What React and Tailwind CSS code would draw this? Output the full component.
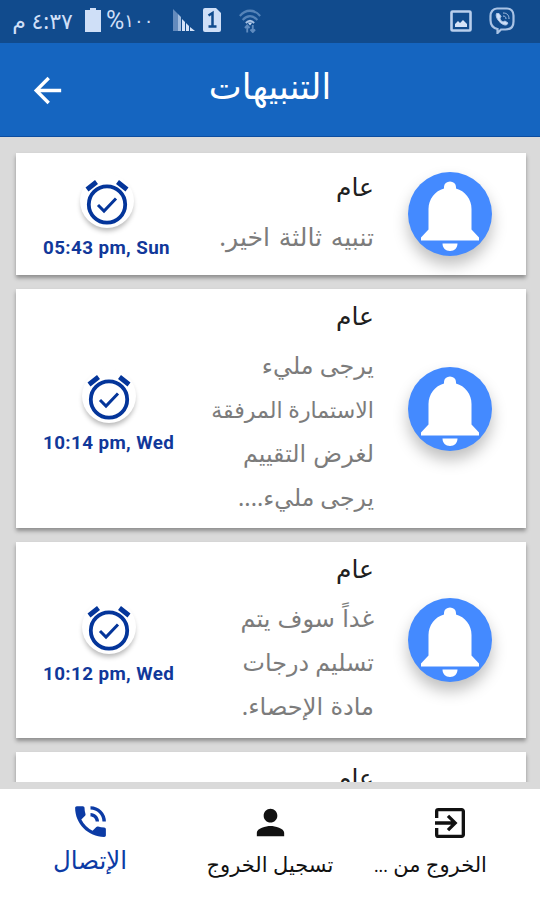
import { MdArrowBack, MdPhoneInTalk, MdPerson, MdExitToApp } from 'react-icons/md';

const NOTIFICATIONS = [
  {
    id: 1,
    title: 'عام',
    lines: [{ text: 'تنبيه ثالثة اخير.', size: 'text-[25.200px] [word-spacing:2px]' }],
    time: '05:43 pm, Sun',
    height: 'h-[122px]',
  },
  {
    id: 2,
    title: 'عام',
    lines: [
      { text: 'يرجى مليء', size: 'text-[23.800px]' },
      { text: 'الاستمارة المرفقة', size: 'text-[22.100px]' },
      { text: 'لغرض التقييم', size: 'text-[23.800px] [word-spacing:1px]' },
      { text: 'يرجى مليء....', size: 'text-[23.500px]' },
    ],
    time: '10:14 pm, Wed',
    height: 'h-[239px]',
  },
  {
    id: 3,
    title: 'عام',
    lines: [
      { text: 'غداً سوف يتم', size: 'text-[24px] [word-spacing:1px]' },
      { text: 'تسليم درجات', size: 'text-[23.800px]' },
      { text: 'مادة الإحصاء.', size: 'text-[24.100px] [word-spacing:1px]' },
    ],
    time: '10:12 pm, Wed',
    height: 'h-[196px]',
  },
];

const BellIcon = () => (
  <svg viewBox="0 0 84 84" className="block h-[84px] w-[84px]" fill="#fff">
    <path d="M36 16.500V15a6 5.500 0 0 1 12 0v1.500C57 19 63.500 27 63.500 37v20.500L71 65.500V68.500H13v-3L20.500 57.500V37c0-10 6.500-18 15.500-20.500Z" />
    <path d="M34.500 71.500h15c0 4.500-3 7.500-7.500 7.500s-7.500-3-7.500-7.500Z" />
  </svg>
);

const AlarmIcon = () => (
  <svg viewBox="0 0 54 54" className="block h-[54px] w-[54px]" fill="none" stroke="#04359a">
    <circle cx="27" cy="30.500" r="18.200" strokeWidth="3.800" />
    <path d="M7 15.500 16.500 8M37.500 8 47 15.500" strokeWidth="4.800" />
    <path d="m18 31 6 6L36 24.500" strokeWidth="3" />
  </svg>
);

const SignalIcon = () => (
  <svg viewBox="0 0 24 24" className="h-6 w-6">
    <path d="M1 1v22h5V6Z" fill="#648bbd" />
    <path d="M6 6v17h3V9Z" fill="#a3bddf" />
    <path d="M10 11v12h3v-9Z" fill="#d5e3f8" />
    <path d="M14 15v8h3v-5Z" fill="#d5e3f8" />
    <path d="M18 19v4h5Z" fill="#d5e3f8" />
  </svg>
);

const WifiIcon = () => (
  <svg viewBox="0 0 26 26" className="h-[26px] w-[24px]" fill="none" preserveAspectRatio="none">
    <path d="M2 9C8 2 18 2 24 9M5 13c5-5 11-5 16 0" stroke="#5583b8" strokeWidth="2.300" />
    <path d="M8.500 16c3-3 6-3 9 0" stroke="#a9c3e5" strokeWidth="2" />
    <path d="M13 18.500 10.500 15.500h5Z" fill="#c5d8f2" />
    <path d="M10 25.500v-7M7.500 21l2.500-2.500 2.500 2.500M16 18v7M13.500 22.500 16 25l2.500-2.500" stroke="#5f8bbf" strokeWidth="2" />
  </svg>
);

const StatusBar = () => (
  <div className="flex h-[43px] shrink-0 items-center bg-[#114b8d] pb-[3px] text-[#cfdff7]">
    <div dir="rtl" className="ml-3 w-[61px] text-center text-[22px] leading-none whitespace-nowrap">٤:٣٧ م</div>
    <svg viewBox="0 0 16 24" className="ml-[12px] h-6 w-4" fill="#cfdff7">
      <path d="M5 0h6v2h5v22H0V2h5Z" />
    </svg>
    <div dir="ltr" className="ml-[5px] flex w-[47px] items-center leading-none whitespace-nowrap">
      <span className="pt-px font-[Roboto] text-[25px]">%</span>
      <span className="text-[18px]">١٠٠</span>
    </div>
    <div className="ml-[19px]"><SignalIcon /></div>
    <svg viewBox="0 0 18 24" className="ml-[7px] h-6 w-[18px]">
      <path d="M2 0h11l5 5v17q0 2-2 2H2q-2 0-2-2V2q0-2 2-2Z" fill="#cfdff7" />
      <path d="M5.500 7.500 9.500 5v13.500M5.500 18.500h8" stroke="#114b8d" strokeWidth="2.500" fill="none" />
    </svg>
    <div className="ml-[17px]"><WifiIcon /></div>
    <svg viewBox="0 0 22 22" className="ml-[188px] mt-px h-[22px] w-[22px]" fill="none">
      <rect x="1.500" y="1.500" width="19" height="19" rx="1" stroke="#b9cfed" strokeWidth="2.600" />
      <path d="M5 17v-3l3-3 2 2 3-3 4 4v3Z" fill="#d5e3f8" />
    </svg>
    <svg viewBox="0 0 26 27" className="ml-[17px] h-[27px] w-[26px]" fill="none" stroke="#a9c3e5">
      <path d="M8 1.500h10c4 0 6.500 3 6.500 7v6c0 5-3 8-8 8h-4.500L8.500 26v-4C4 21 1.500 18 1.500 13V9c0-4 2.500-7.500 6.500-7.500Z" strokeWidth="2.200" />
      <path d="M7.500 6.500c-2 4 5 12.500 10 11.500l1.500-2-3-2-2 1c-2-1-3-2.500-3-4l1-1.500-2-3Z" fill="#cfdff7" strokeWidth="1" />
      <path d="M14 6c4 0 6 2 6 6M14 9c2 0 3 1 3 3" strokeWidth="1" />
    </svg>
  </div>
);

const Header = () => (
  <header className="grid h-[94px] shrink-0 grid-cols-[1fr_2fr_1fr] items-center border-b border-[#0c4da0] bg-[#1565c0] text-white">
    <MdArrowBack size={41} className="mt-px ml-[27px]" />
    <h1 dir="rtl" className="pb-[9px] text-center text-[35px] leading-none font-normal">التنبيهات</h1>
    <span />
  </header>
);

const NotificationCard = ({ item }) => (
  <article className={`flex shrink-0 items-center bg-white shadow-[0_3px_4px_rgba(0,0,0,0.35)] ${item.height}`}>
    <div className="w-[184px] pt-[6px] pl-[27px]">
      <div className="flex w-fit flex-col items-center">
        <div className="rounded-full shadow-[0_4px_5px_-1px_rgba(0,0,0,0.28)]"><AlarmIcon /></div>
        <time className="mt-[8px] font-[Roboto] text-[18.800px] leading-6 font-bold tracking-[0.400px] whitespace-nowrap text-[#11389a]">{item.time}</time>
      </div>
    </div>
    <div dir="rtl" className="w-[174px] pb-[4px] whitespace-nowrap">
      <h2 className="mb-[7px] text-[25px] leading-[41px] text-[#202020]">{item.title}</h2>
      {item.lines.map(line => (
        <p key={line.text} className={`leading-[44px] text-[#7c7c7c] ${line.size}`}>{line.text}</p>
      ))}
    </div>
    <div className="ml-[34px] rounded-full bg-[#448aff] shadow-[0_9px_15px_rgba(0,0,0,0.25)]"><BellIcon /></div>
  </article>
);

const BottomNav = () => (
  <nav className="grid h-[111px] shrink-0 grid-cols-3 bg-white text-[#111]">
    <button className="flex flex-col items-center pt-[12px] text-[#0c3ba5]">
      <MdPhoneInTalk size={41} />
      <span dir="rtl" className="text-[24.500px] leading-[36px]">الإتصال</span>
    </button>
    <button className="flex flex-col items-center pt-[13px]">
      <MdPerson size={41} />
      <span dir="rtl" className="text-[21px] leading-[43px] whitespace-nowrap">تسجيل الخروج</span>
    </button>
    <button className="flex flex-col items-center pt-[14px]">
      <MdExitToApp size={40} />
      <span dir="rtl" className="mr-[39px] text-[21px] leading-[43px] whitespace-nowrap">
        الخروج من <span className="text-[17px]">...</span>
      </span>
    </button>
  </nav>
);

const App = () => (
  <div dir="ltr" className="flex h-[900px] w-[540px] flex-col overflow-hidden bg-[#dadada] font-['Noto_Sans','DejaVu_Sans',sans-serif]">
    <StatusBar />
    <Header />
    <main className="mb-[7px] flex h-[645px] shrink-0 flex-col gap-[14px] overflow-hidden pt-4 pr-[14px] pl-4">
      {NOTIFICATIONS.map(item => <NotificationCard key={item.id} item={item} />)}
      {/* next item, partly scrolled out of view */}
      <article dir="rtl" className="h-[122px] shrink-0 bg-white pt-[5px] pr-[152px] shadow-[0_3px_4px_rgba(0,0,0,0.35)]">
        <h2 className="text-[25px] leading-[41px] text-[#202020]">عام</h2>
      </article>
    </main>
    <BottomNav />
  </div>
);

export default App;
